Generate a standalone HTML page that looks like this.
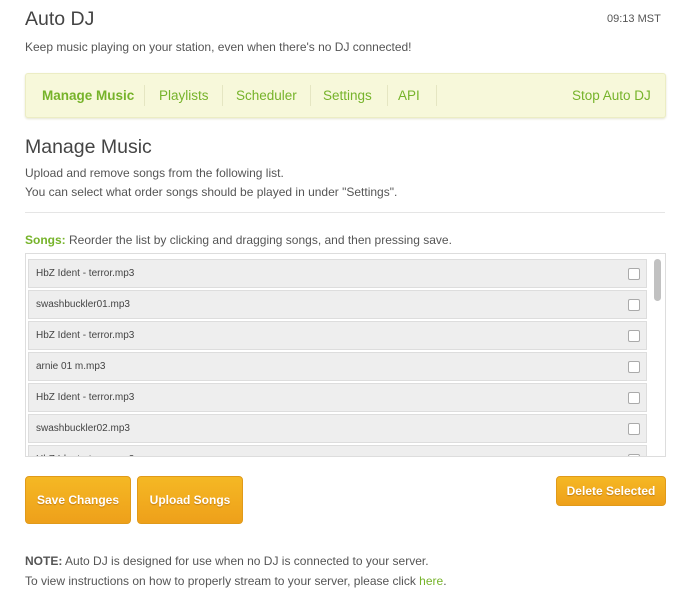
<!DOCTYPE html>
<html><head><style>
body{margin:0;background:#fff;font-family:"Liberation Sans",sans-serif;color:#555;width:688px;height:605px;overflow:hidden;position:relative}
.a{position:absolute}
.nav{left:25px;top:73px;width:639px;height:43px;background:#f7f8da;border:1px solid #ecedc4;border-radius:3px;box-shadow:0 1px 2px #e4e4d0}
.nav span{position:absolute;top:14px;font-size:13.5px;color:#76b32a}
.sep{position:absolute;top:11px;width:1px;height:21px;background:#e5e6c2}
.list{left:25px;top:253px;width:639px;height:202px;border:1px solid #ddd;overflow:hidden}
.row{position:absolute;left:2px;width:617px;height:27px;background:#eee;border:1px solid #ddd;font-size:10px;color:#444;line-height:27px;text-indent:7px}
.cb{position:absolute;right:6px;top:8px;width:10px;height:10px;border:1px solid #aaa;border-radius:2px;background:#fff}
.btn{background:linear-gradient(#f5b824,#eea01a);border:1px solid #e09a1a;border-radius:4px;color:#fff;font-size:12px;font-weight:bold;text-align:center;text-shadow:0 1px 1px #c47f10}
</style></head><body>
<div class="a" style="left:25px;top:8px;font-size:19.5px;color:#444">Auto DJ</div>
<div class="a" style="left:607px;top:13px;font-size:11px;color:#555">09:13 MST</div>
<div class="a" style="left:25px;top:40px;font-size:12px">Keep music playing on your station, even when there's no DJ connected!</div>
<div class="a nav">
<span style="left:16px;font-weight:bold">Manage Music</span><div class="sep" style="left:118px"></div>
<span style="left:133px">Playlists</span><div class="sep" style="left:196px"></div>
<span style="left:210px">Scheduler</span><div class="sep" style="left:284px"></div>
<span style="left:297px">Settings</span><div class="sep" style="left:361px"></div>
<span style="left:372px">API</span><div class="sep" style="left:410px"></div>
<span style="left:546px">Stop Auto DJ</span>
</div>
<div class="a" style="left:25px;top:136px;font-size:19.5px;color:#444">Manage Music</div>
<div class="a" style="left:25px;top:166px;font-size:12px">Upload and remove songs from the following list.</div>
<div class="a" style="left:25px;top:185px;font-size:12px">You can select what order songs should be played in under "Settings".</div>
<div class="a" style="left:25px;top:212px;width:640px;height:1px;background:#e5e5e5"></div>
<div class="a" style="left:25px;top:233px;font-size:12px"><b style="color:#76b32a">Songs:</b> Reorder the list by clicking and dragging songs, and then pressing save.</div>
<div class="a list">
<div class="row" style="top:5px">HbZ Ident - terror.mp3<div class="cb"></div></div>
<div class="row" style="top:36px">swashbuckler01.mp3<div class="cb"></div></div>
<div class="row" style="top:67px">HbZ Ident - terror.mp3<div class="cb"></div></div>
<div class="row" style="top:98px">arnie 01 m.mp3<div class="cb"></div></div>
<div class="row" style="top:129px">HbZ Ident - terror.mp3<div class="cb"></div></div>
<div class="row" style="top:160px">swashbuckler02.mp3<div class="cb"></div></div>
<div class="row" style="top:191px">HbZ Ident - terror.mp3<div class="cb"></div></div>
<div style="position:absolute;left:628px;top:5px;width:7px;height:42px;background:#c1c1c1;border-radius:4px"></div>
</div>
<div class="a btn" style="left:25px;top:476px;width:104px;height:46px;line-height:46px">Save Changes</div>
<div class="a btn" style="left:137px;top:476px;width:104px;height:46px;line-height:46px">Upload Songs</div>
<div class="a btn" style="left:556px;top:476px;width:108px;height:28px;line-height:28px">Delete Selected</div>
<div class="a" style="left:25px;top:554px;font-size:12px"><b>NOTE:</b> Auto DJ is designed for use when no DJ is connected to your server.</div>
<div class="a" style="left:25px;top:574px;font-size:12px">To view instructions on how to properly stream to your server, please click <span style="color:#76b32a">here</span>.</div>
</body></html>
